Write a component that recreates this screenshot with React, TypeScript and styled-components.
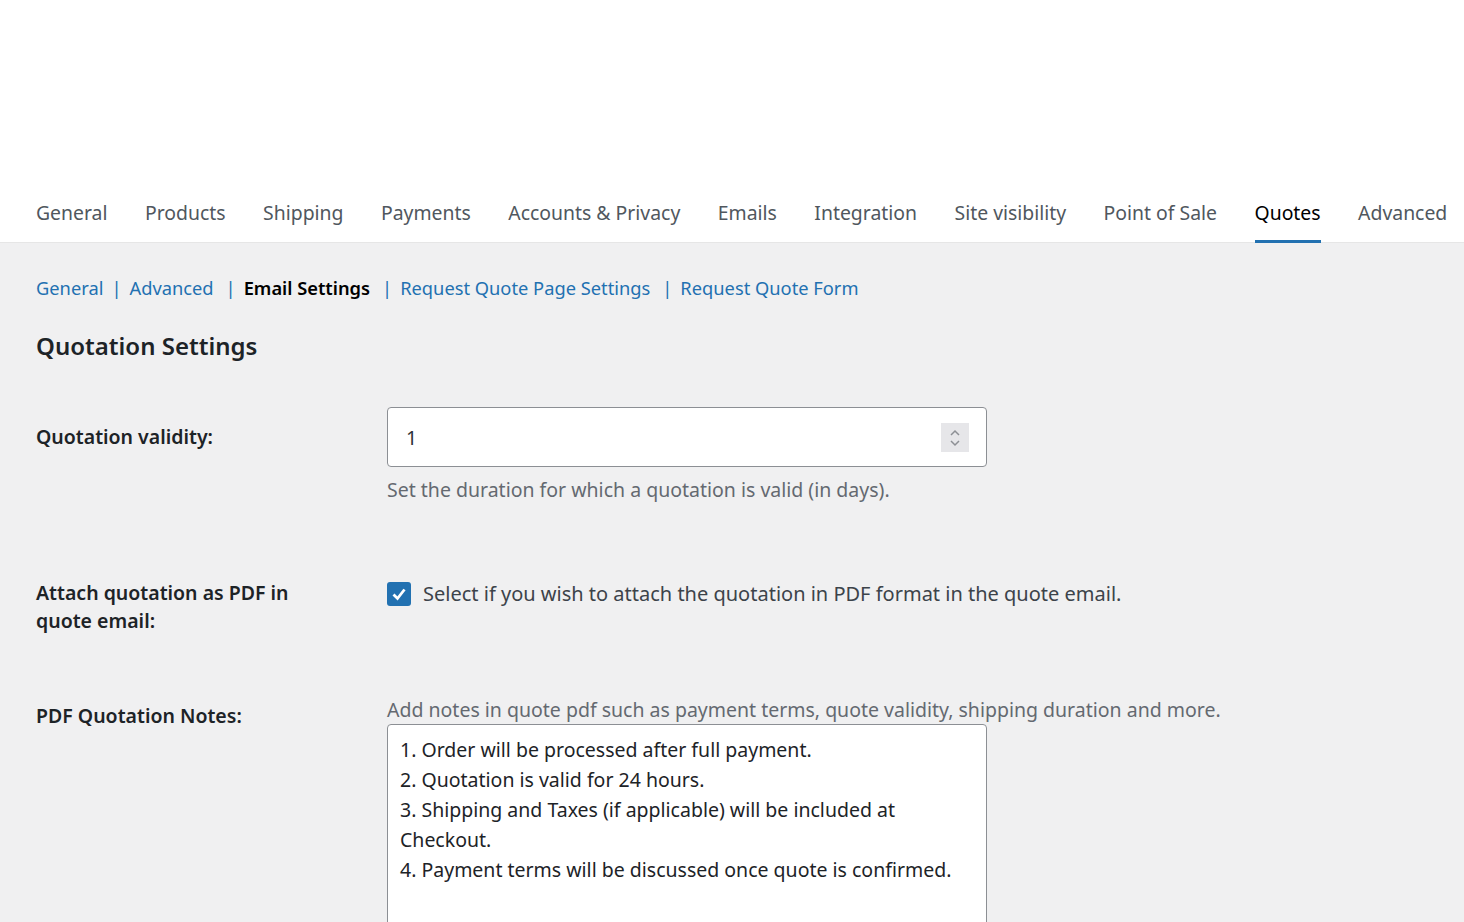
import React from 'react'
import styled, { createGlobalStyle } from 'styled-components'

const Global = createGlobalStyle`
  html, body {
    margin: 0;
    padding: 0;
    background: #f0f0f1;
    font-family: 'Noto Sans', 'Open Sans', sans-serif;
    color: #1d2327;
  }
  * { box-sizing: border-box; }
`

const Page = styled.div`
  width: 1464px;
  height: 922px;
  overflow: hidden;
  background: #f0f0f1;
`

const Header = styled.div`
  height: 243px;
  background: #fff;
  border-bottom: 1px solid #e6e6e6;
  display: flex;
  align-items: flex-end;
  padding-left: 36px;
`

const Tabs = styled.nav`
  display: flex;
  gap: 37.5px;
  white-space: nowrap;
`

const Tab = styled.a<{ $active?: boolean }>`
  font-size: 19.4px;
  line-height: 28px;
  padding-bottom: 13px;
  color: ${(p) => (p.$active ? '#000' : '#50575e')};
  border-bottom: 3px solid ${(p) => (p.$active ? '#2271b1' : 'transparent')};
  text-decoration: none;
  margin-bottom: -1px;
`

const Body = styled.div`
  padding: 30px 36px 0;
`

const SubNav = styled.div`
  display: flex;
  align-items: center;
  font-size: 18.3px;
  line-height: 30px;
  white-space: nowrap;
`

const SubLink = styled.a<{ $current?: boolean }>`
  color: ${(p) => (p.$current ? '#000' : '#2271b1')};
  font-weight: ${(p) => (p.$current ? 600 : 400)};
  text-decoration: none;
`

const Sep = styled.span<{ $wide?: boolean }>`
  color: #2271b1;
  margin: 0 8px 0 ${(p) => (p.$wide ? 12 : 8)}px;
`

const Heading = styled.h2`
  margin: 26px 0 0;
  font-size: 24px;
  line-height: 34px;
  font-weight: 600;
  color: #1d2327;
`

const Form = styled.div`
  margin-top: 44px;
  display: grid;
  grid-template-columns: 351px 1fr;
`

const Label = styled.div<{ $top: number }>`
  font-size: 19.5px;
  line-height: 28px;
  font-weight: 600;
  color: #1d2327;
  padding-top: ${(p) => p.$top}px;
  padding-right: 60px;
`

const Field = styled.div<{ $pb: number }>`
  padding-bottom: ${(p) => p.$pb}px;
`

const NumberWrap = styled.div`
  position: relative;
  width: 600px;
  height: 60px;
  background: #fff;
  border: 1px solid #8c8f94;
  border-radius: 4px;
  display: flex;
  align-items: center;
  padding-left: 18px;
  font-size: 19.5px;
  color: #2c3338;
`

const Spinner = styled.div`
  position: absolute;
  right: 17px;
  top: 15px;
  width: 28px;
  height: 29px;
  background: #e6e6e9;
  display: flex;
  align-items: center;
  justify-content: center;
`

const Desc = styled.p`
  margin: 8px 0 0;
  font-size: 19.5px;
  line-height: 30px;
  color: #646970;
`

const CheckRow = styled.label`
  display: flex;
  align-items: center;
  gap: 12px;
  font-size: 20px;
  line-height: 28px;
  color: #3c434a;
  padding-top: 1px;
`

const Box = styled.span`
  width: 24px;
  height: 24px;
  border-radius: 3px;
  background: #2271b1;
  display: flex;
  align-items: center;
  justify-content: center;
`

const NotesDesc = styled.p`
  margin: 0;
  font-size: 19.5px;
  line-height: 30px;
  color: #646970;
`

const NotesBox = styled.div`
  margin-top: -1px;
  width: 600px;
  height: 260px;
  background: #fff;
  border: 1px solid #8c8f94;
  border-radius: 4px;
  padding: 10px 12px;
  font-size: 19.5px;
  line-height: 30px;
  color: #1d2327;
`

const tabs = [
  'General',
  'Products',
  'Shipping',
  'Payments',
  'Accounts & Privacy',
  'Emails',
  'Integration',
  'Site visibility',
  'Point of Sale',
  'Quotes',
  'Advanced',
]

const notes = [
  '1. Order will be processed after full payment.',
  '2. Quotation is valid for 24 hours.',
  '3. Shipping and Taxes (if applicable) will be included at Checkout.',
  '4. Payment terms will be discussed once quote is confirmed.',
]

export default function App() {
  return (
    <Page>
      <Global />
      <Header>
        <Tabs>
          {tabs.map((t) => (
            <Tab key={t} $active={t === 'Quotes'}>
              {t}
            </Tab>
          ))}
        </Tabs>
      </Header>
      <Body>
        <SubNav>
          <SubLink>General</SubLink>
          <Sep>|</Sep>
          <SubLink>Advanced</SubLink>
          <Sep $wide>|</Sep>
          <SubLink $current>Email Settings</SubLink>
          <Sep $wide>|</Sep>
          <SubLink>Request Quote Page Settings</SubLink>
          <Sep $wide>|</Sep>
          <SubLink>Request Quote Form</SubLink>
        </SubNav>
        <Heading>Quotation Settings</Heading>
        <Form>
          <Label $top={16}>Quotation validity:</Label>
          <Field $pb={74}>
            <NumberWrap>
              1
              <Spinner>
                <svg width="14" height="22" viewBox="0 0 14 22">
                  <path d="M3 8 L7 4 L11 8" fill="none" stroke="#8c8f94" strokeWidth="1.5" />
                  <path d="M3 14 L7 18 L11 14" fill="none" stroke="#8c8f94" strokeWidth="1.5" />
                </svg>
              </Spinner>
            </NumberWrap>
            <Desc>Set the duration for which a quotation is valid (in days).</Desc>
          </Field>

          <Label $top={0}>Attach quotation as PDF in quote email:</Label>
          <Field $pb={87}>
            <CheckRow>
              <Box>
                <svg width="18" height="18" viewBox="0 0 18 18">
                  <path d="M3.5 9.5 L7.5 13.5 L14.5 4.5" fill="none" stroke="#fff" strokeWidth="2.8" />
                </svg>
              </Box>
              Select if you wish to attach the quotation in PDF format in the quote email.
            </CheckRow>
          </Field>

          <Label $top={7}>PDF Quotation Notes:</Label>
          <Field $pb={0}>
            <NotesDesc>
              Add notes in quote pdf such as payment terms, quote validity, shipping duration and more.
            </NotesDesc>
            <NotesBox>
              {notes.map((n) => (
                <div key={n}>{n}</div>
              ))}
            </NotesBox>
          </Field>
        </Form>
      </Body>
    </Page>
  )
}
